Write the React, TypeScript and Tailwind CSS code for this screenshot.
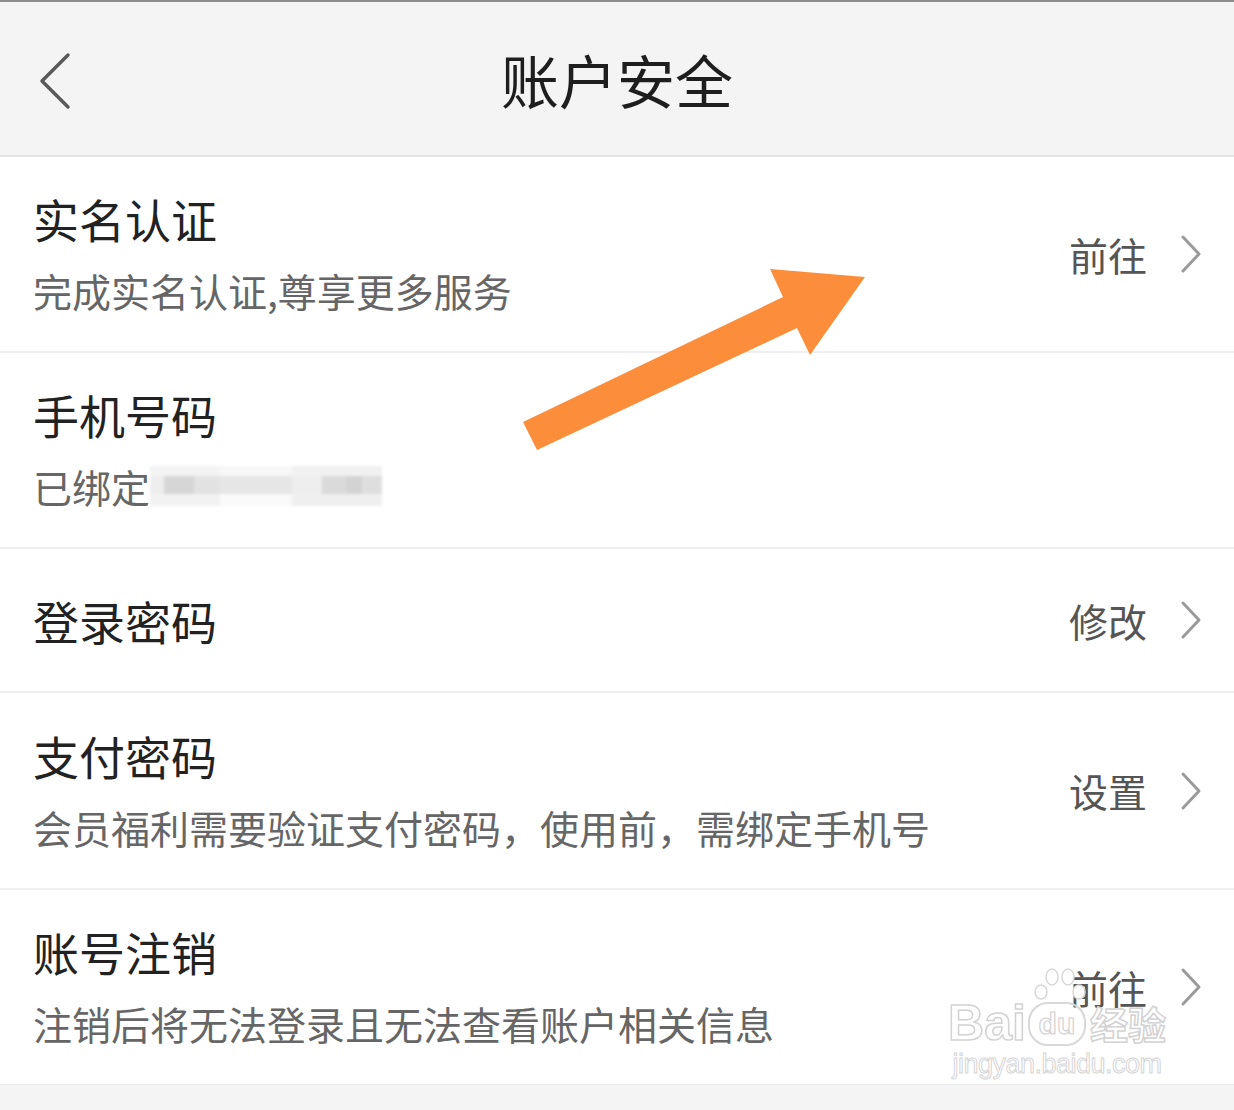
import type { ReactNode } from "react";

type Row = {
  title: string;
  sub?: ReactNode;
  action?: string;
  height: string;
};

function Chevron() {
  return (
    <svg width="22" height="40" viewBox="0 0 22 40" className="shrink-0">
      <polyline points="3,3 19,20 3,37" fill="none" stroke="#9a9a9a" strokeWidth="3" strokeLinecap="round" strokeLinejoin="round" />
    </svg>
  );
}

function MaskedPhone() {
  return (
    <span className="flex h-[56px] items-center">
      <span className="flex h-[52px] w-[232px] flex-col justify-center gap-0 blur-[1.5px]">
        <span className="flex h-[10px]">
          <span className="w-[70px] bg-[#f3f3f3]" />
          <span className="w-[72px] bg-[#f7f7f7]" />
          <span className="w-[90px] bg-[#f1f1f1]" />
        </span>
        <span className="flex h-[18px]">
          <span className="w-[14px] bg-[#eeeeee]" />
          <span className="w-[30px] bg-[#d6d6d6]" />
          <span className="w-[26px] bg-[#e2e2e2]" />
          <span className="w-[72px] bg-[#e6e6e6]" />
          <span className="w-[30px] bg-[#eeeeee]" />
          <span className="w-[24px] bg-[#dadada]" />
          <span className="w-[16px] bg-[#d3d3d3]" />
          <span className="w-[20px] bg-[#dedede]" />
        </span>
        <span className="flex h-[12px]">
          <span className="w-[70px] bg-[#f2f2f2]" />
          <span className="w-[72px] bg-[#fafafa]" />
          <span className="w-[90px] bg-[#efefef]" />
        </span>
      </span>
    </span>
  );
}

const rows: Row[] = [
  { title: "实名认证", sub: "完成实名认证,尊享更多服务", action: "前往", height: "h-[196px]" },
  {
    title: "手机号码",
    sub: (
      <span className="flex items-center">
        已绑定
        <MaskedPhone />
      </span>
    ),
    height: "h-[196px]",
  },
  { title: "登录密码", action: "修改", height: "h-[144px]" },
  { title: "支付密码", sub: "会员福利需要验证支付密码，使用前，需绑定手机号", action: "设置", height: "h-[197px]" },
  { title: "账号注销", sub: "注销后将无法登录且无法查看账户相关信息", action: "前往", height: "h-[195px]" },
];

function Watermark() {
  return (
    <div className="pointer-events-none absolute left-[944px] top-[1000px] flex w-[226px] flex-col items-center text-white">
      <div className="flex items-end gap-[2px]">
        <span className="font-['Liberation_Sans',sans-serif] text-[50px] font-bold leading-[46px] [-webkit-text-stroke:1.5px_#d2d2d2]">Bai</span>
        <span className="relative flex h-[44px] w-[58px] items-center justify-center rounded-[20px] border-[2px] border-[#d8d8d8]">
          <span className="font-['Liberation_Sans',sans-serif] text-[30px] font-bold leading-none [-webkit-text-stroke:1.2px_#d2d2d2]">du</span>
          <svg className="absolute -top-[38px] left-[2px]" width="56" height="38" viewBox="0 0 56 38">
            <ellipse cx="9" cy="26" rx="6" ry="7" fill="white" stroke="#d8d8d8" strokeWidth="1.5" />
            <ellipse cx="20" cy="11" rx="6" ry="8" fill="white" stroke="#d8d8d8" strokeWidth="1.5" />
            <ellipse cx="36" cy="11" rx="6" ry="8" fill="white" stroke="#d8d8d8" strokeWidth="1.5" />
            <ellipse cx="47" cy="26" rx="6" ry="7" fill="white" stroke="#d8d8d8" strokeWidth="1.5" />
          </svg>
        </span>
        <span className="ml-[2px] font-['Noto_Sans_CJK_SC',sans-serif] text-[38px] font-bold leading-[46px] [-webkit-text-stroke:1.5px_#d2d2d2]">经验</span>
      </div>
      <span className="mt-[4px] font-['Liberation_Sans',sans-serif] text-[27px] leading-[28px] tracking-[-0.5px] [-webkit-text-stroke:1px_#d6d6d6]">jingyan.baidu.com</span>
    </div>
  );
}

export default function App() {
  return (
    <div className="relative min-h-screen w-[1234px] overflow-hidden bg-[#f4f4f4] font-['Noto_Sans_CJK_SC','Noto_Sans',sans-serif]">
      <div className="h-[2px] bg-[#8c8c8c]" />
      <header className="relative flex h-[155px] items-center justify-center border-b-2 border-[#e4e4e4] bg-[#f4f4f4]">
        <svg className="absolute left-[38px] top-[50px]" width="34" height="58" viewBox="0 0 34 58">
          <polyline points="30,3 4,29 30,55" fill="none" stroke="#5a5a5a" strokeWidth="3.5" strokeLinecap="round" strokeLinejoin="round" />
        </svg>
        <h1 className="text-[58px] font-normal leading-none text-[#1e1e1e]">账户安全</h1>
      </header>

      <div className="bg-white">
        {rows.map((row, i) => (
          <div key={row.title} className={`flex items-center justify-between pl-[33px] pr-[32px] ${row.height} ${i < rows.length - 1 ? "border-b-2 border-[#efefef]" : "border-b border-[#ebebeb]"}`}>
            <div className="flex flex-col">
              <div className="text-[46px] leading-[56px] text-[#222]">{row.title}</div>
              {row.sub ? <div className="mt-[16px] text-[39px] leading-[56px] text-[#666]">{row.sub}</div> : null}
            </div>
            {row.action ? (
              <div className="flex items-center gap-[33px]">
                <span className="text-[39px] leading-none text-[#555]">{row.action}</span>
                <Chevron />
              </div>
            ) : null}
          </div>
        ))}
      </div>

      <svg className="pointer-events-none absolute left-0 top-0" width="1234" height="1110" viewBox="0 0 1234 1110">
        <polygon points="523,422 783,297 770,269 865,277 810,355 797,328 537,450" fill="#fb8d3b" />
      </svg>

      <Watermark />
    </div>
  );
}
